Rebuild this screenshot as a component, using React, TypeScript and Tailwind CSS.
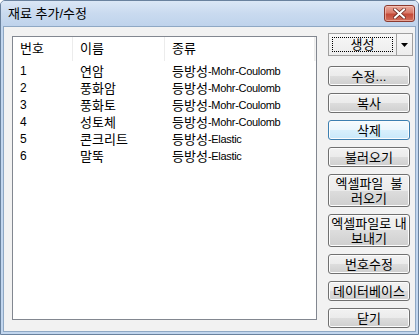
import React from "react";

const F = { fontFamily: '"Liberation Sans","Noto Sans CJK KR",sans-serif' };

const btnBase =
  "w-[82px] rounded-[3px] border flex flex-col items-center justify-center text-[13px] leading-[15px] text-black shadow-[inset_0_0_0_1px_#fcfcfc]";
const btnNormal =
  "border-[#707070] bg-[linear-gradient(to_bottom,#f2f2f2_0%,#ebebeb_50%,#dddddd_50%,#cfcfcf_100%)]";
const btnFocus =
  "border-[#3c7fb1] bg-[linear-gradient(to_bottom,#f6fbfe_0%,#eaf6fd_50%,#d9f0fc_50%,#c8e8fa_100%)] shadow-[inset_0_0_0_1px_#d6f0fb]";

function Btn({ children, h = "h-[20px]", focus = false, mt = "mt-[7px]" }: { children: React.ReactNode; h?: string; focus?: boolean; mt?: string }) {
  return <div className={`${btnBase} ${h} ${mt} ${focus ? btnFocus : btnNormal}`}>{children}</div>;
}

const rows = [
  ["1", "연암", "Mohr-Coulomb"],
  ["2", "풍화암", "Mohr-Coulomb"],
  ["3", "풍화토", "Mohr-Coulomb"],
  ["4", "성토체", "Mohr-Coulomb"],
  ["5", "콘크리트", "Elastic"],
  ["6", "말뚝", "Elastic"],
];

export default function App() {
  return (
    <div style={F} className="w-[419px] h-[335px] border border-[#6a829e] bg-[#c2d6ee] flex flex-col rounded-t-[5px] overflow-hidden">
      {/* title bar */}
      <div className="h-[25px] shrink-0 flex items-start bg-[linear-gradient(to_bottom,#dbe7f5_0%,#c9daef_50%,#bfd3ec_100%)]">
        <div className="pl-[7px] h-[25px] flex items-center text-[13px] text-black leading-none">재료 추가/수정</div>
        <div className="ml-auto mr-[3px] mt-[4px] w-[31px] h-[17px] rounded-[3px] border border-[#8c3a2f] bg-[linear-gradient(to_bottom,#e9a99b_0%,#d97b6b_45%,#c44a38_55%,#d2705d_100%)] shadow-[inset_0_0_0_1px_rgba(255,220,210,0.5)] flex items-center justify-center">
          <svg width="13" height="11" viewBox="0 0 13 11">
            <path d="M2 1.5 L11 9.5 M11 1.5 L2 9.5" stroke="#6b2a22" strokeWidth="3.6" strokeLinecap="square" />
            <path d="M2 1.5 L11 9.5 M11 1.5 L2 9.5" stroke="#ffffff" strokeWidth="2" strokeLinecap="square" />
          </svg>
        </div>
      </div>
      {/* body */}
      <div className="flex-1 mx-[2px] mb-[2px] border border-[#8fa8c4] bg-[#f2f2f2] flex items-start pl-[8px]">
        {/* list */}
        <div className="mt-[9px] w-[305px] h-[284px] border border-[#828790] bg-white flex flex-col">
          <div className="h-[24px] flex text-[13px] text-black shrink-0">
            <div className="w-[60px] pl-[7px] flex items-center border-r border-[#ececec]">번호</div>
            <div className="w-[92px] pl-[7px] flex items-center border-r border-[#ececec]">이름</div>
            <div className="w-[150px] pl-[7px] flex items-center border-r border-[#ececec]">종류</div>
            <div className="flex-1 bg-[#f3f3f3]"></div>
          </div>
          <div className="pt-[2px] flex flex-col">
            {rows.map((r) => (
              <div key={r[0]} className="h-[17px] flex items-center text-black">
                <div className="w-[60px] pl-[7px] text-[12px] leading-[17px]">{r[0]}</div>
                <div className="w-[92px] pl-[7px] text-[13px] leading-[17px]">{r[1]}</div>
                <div className="pl-[7px] leading-[17px] flex items-center whitespace-nowrap">
                  <span className="text-[13px]">등방성</span>
                  <span className="text-[11px] tracking-[-0.3px]">-{r[2]}</span>
                </div>
              </div>
            ))}
          </div>
        </div>
        {/* buttons */}
        <div className="ml-[11px] mt-[6px] flex flex-col w-[82px]">
          <div className="w-[85px] h-[23px] flex border border-[#a0a0a0] bg-[linear-gradient(to_bottom,#f7f7f7_0%,#ececec_100%)]">
            <div className="flex-1 p-[3px] border-r border-[#a0a0a0]">
              <div className="w-full h-full border border-dotted border-black flex items-center justify-center text-[13px] leading-none">생성</div>
            </div>
            <div className="w-[15px] flex items-center justify-center">
              <svg width="7" height="4" viewBox="0 0 7 4"><path d="M0 0 H7 L3.5 4 Z" fill="#000" /></svg>
            </div>
          </div>
          <Btn mt="mt-[10px]">수정...</Btn>
          <Btn>복사</Btn>
          <Btn focus>삭제</Btn>
          <Btn>불러오기</Btn>
          <Btn h="h-[33px]">
            <span className="whitespace-pre">엑셀파일  불</span>
            <span>러오기</span>
          </Btn>
          <Btn h="h-[33px]">
            <span className="whitespace-pre">엑셀파일로 내</span>
            <span>보내기</span>
          </Btn>
          <Btn>번호수정</Btn>
          <Btn>데이터베이스</Btn>
          <Btn>닫기</Btn>
        </div>
      </div>
    </div>
  );
}
